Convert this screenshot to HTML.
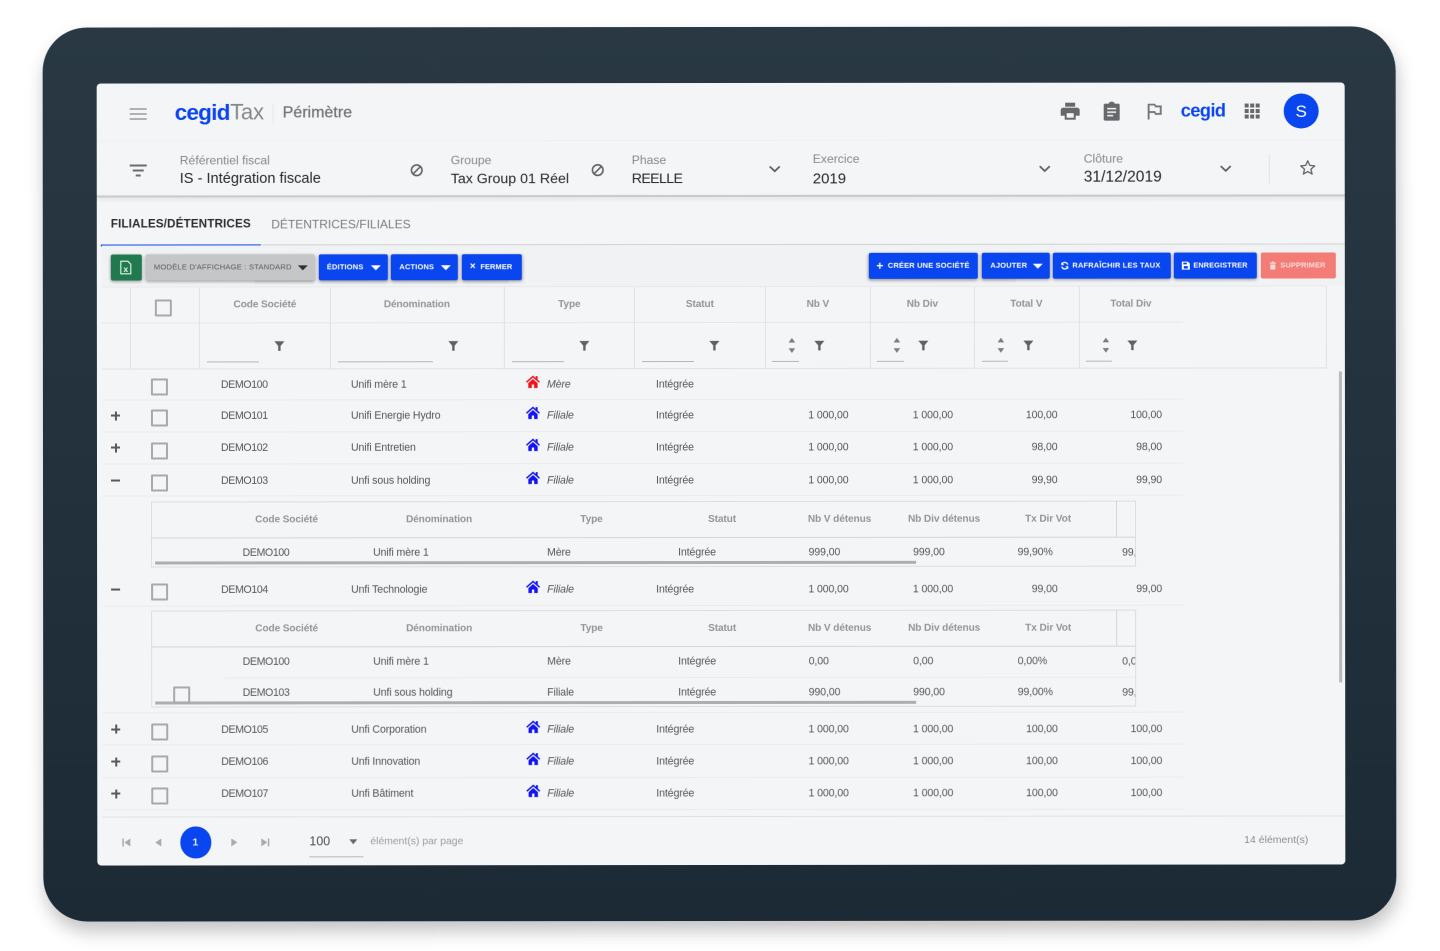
<!DOCTYPE html>
<html lang="fr"><head><meta charset="utf-8"><title>cegid Tax - Périmètre</title>
<style>
html,body{margin:0;padding:0;width:1440px;height:951px;overflow:hidden;background:#fff}
body{font-family:"Liberation Sans",sans-serif;position:relative}
#stage{position:absolute;left:0;top:0;width:1440px;height:951px;transform:rotate(-.05deg);filter:blur(.3px)}
#device{position:absolute;left:43px;top:27px;width:1353px;height:894px;border-radius:44px;background:linear-gradient(#293843,#1c2a36);box-shadow:2px 10px 18px rgba(0,0,0,.24)}
#screen{position:absolute;left:97px;top:83px;width:1248px;height:782px;background:#f4f5f7;border-radius:4px}
.a{position:absolute}
.t{position:absolute;white-space:nowrap;line-height:1;transform:translateY(-50%)}
.c{position:absolute;white-space:nowrap;line-height:1;transform:translate(-50%,-50%)}
.e{position:absolute;white-space:nowrap;line-height:1;transform:translate(-100%,-50%)}
.row{position:absolute;left:0;width:1440px;height:0;margin-top:.7px;font-size:10.6px;color:#53565a;letter-spacing:-.12px}
.hd{font-size:10.1px;font-weight:bold;color:#929598;letter-spacing:-.1px}
.d{letter-spacing:-.38px}
.lb{font-size:12.2px;color:#85888b}
.vl{font-size:15px;color:#25282b}
.it{font-style:italic}
.ln{position:absolute;height:1px;background:#eaebed}
.v{position:absolute;width:1px;background:#dfe1e3}
.cb{position:absolute;width:13px;height:13px;margin-top:-1px;border:2px solid #a8a9ab;border-radius:1px;box-sizing:content-box}
.btn{position:absolute;border-radius:2px;background:#0a46f0;box-shadow:0 1px 3px rgba(0,0,0,.4);color:#fff;font-size:7.5px;font-weight:bold;letter-spacing:.15px;line-height:26px;height:26px;white-space:nowrap;box-sizing:border-box}
.btn span{position:absolute;top:0}
.caret{position:absolute;width:0;height:0;border-left:5px solid transparent;border-right:5px solid transparent;border-top:5px solid #fff;top:11px}
.pl{position:absolute;left:111px;width:9px;height:2px;background:#57595c;margin-top:-2px}
.pl.p:after{content:"";position:absolute;left:3.5px;top:-3.5px;width:2px;height:9px;background:#57595c}
svg{position:absolute;overflow:visible}
.h{left:526px;top:-10px}
.sc{position:absolute;height:3px;left:155px;width:761px;background:#adaeb0}
</style></head><body>
<svg width="0" height="0" style="position:absolute"><defs>
<symbol id="home" viewBox="0 0 24 22"><path d="M12 .5 0 11l1.700 2L12 4l10.300 9 1.700-2-4-3.500V1.500h-3.500v3zM4 13.500V22h6v-6h4v6h6v-8.500L12 6.500z" fill="currentColor"/></symbol>
<symbol id="fun" viewBox="0 0 12 12"><path d="M.5 1h11L7.300 6v5.500H4.700V6z" fill="#5f6265"/></symbol>
<symbol id="chev" viewBox="0 0 12 8"><path d="M1 1.500 6 6.300l5-4.800" fill="none" stroke="#5a5d60" stroke-width="1.700"/></symbol>
<symbol id="ban" viewBox="0 0 14 14"><circle cx="7" cy="7" r="5.300" fill="none" stroke="#5f6265" stroke-width="1.600"/><path d="M3.300 10.700l7.400-7.400" stroke="#5f6265" stroke-width="1.600"/></symbol>
<symbol id="spin" viewBox="0 0 8 18"><path d="M4 1l3.500 5h-7zM4 17 .5 12h7z" fill="#7a7d80"/></symbol>
</defs></svg>
<div id="stage">
<div id="device"></div>
<div id="screen"></div>

<!-- top bar -->
<div class="ln" style="left:97px;top:140px;width:1248px;background:#eff0f2"></div>
<div class="a" style="left:130px;top:107.500px;width:16.500px;height:1.600px;background:#6a6d70;box-shadow:0 5px 0 #6a6d70,0 10px 0 #6a6d70"></div>
<div class="t" style="left:175px;top:112.500px;font-size:22.500px;font-weight:bold;color:#0a46f0;letter-spacing:-.75px">cegid</div>
<div class="t" style="left:230.500px;top:111.500px;font-size:22px;color:#85888b;letter-spacing:-.2px">Tax</div>
<div class="v" style="left:273px;top:103px;height:20px;background:#e6e7e9"></div>
<div class="t" style="left:283px;top:113px;font-size:16px;font-weight:normal;color:#717477;-webkit-text-stroke:.25px #717477">Périmètre</div>

<svg style="left:1061px;top:103px" width="19" height="17" viewBox="0 0 19 17"><path d="M4.500 0h10v4h-10zM2.500 5h14A2.500 2.500 0 0 1 19 7.500V13h-4v4H4v-4H0V7.500A2.500 2.500 0 0 1 2.500 5zM6 10.500V15h7v-4.500z" fill="#66696c" fill-rule="evenodd"/></svg>
<svg style="left:1104px;top:102px" width="16" height="19" viewBox="0 0 16 19"><path d="M1.500 2H5a3 2 0 0 1 6 0h3.500A1.500 1.500 0 0 1 16 3.500v14a1.500 1.500 0 0 1-1.500 1.500h-13A1.500 1.500 0 0 1 0 17.500v-14A1.500 1.500 0 0 1 1.500 2z" fill="#66696c"/><path d="M3.500 7h9M3.500 10.500h9M3.500 14h6" stroke="#f4f5f7" stroke-width="1.500"/></svg>
<svg style="left:1147.500px;top:104px" width="14" height="16" viewBox="5 4 15 17"><path d="M14 6l-1-2H5v17h2v-7h5l1 2h7V6h-6zm4 8h-4l-1-2H7V6h5l1 2h5v6z" fill="#727578"/></svg>
<div class="t" style="left:1181px;top:110.500px;font-size:18.300px;font-weight:bold;color:#0a46f0;letter-spacing:-.6px">cegid</div>
<svg style="left:1245px;top:104px" width="15" height="15" viewBox="0 0 15 15" fill="#66696c"><rect width="4" height="4"/><rect x="5.500" width="4" height="4"/><rect x="11" width="4" height="4"/><rect y="5.500" width="4" height="4"/><rect x="5.500" y="5.500" width="4" height="4"/><rect x="11" y="5.500" width="4" height="4"/><rect y="11" width="4" height="4"/><rect x="5.500" y="11" width="4" height="4"/><rect x="11" y="11" width="4" height="4"/></svg>
<div class="a" style="left:1284px;top:94px;width:35px;height:35px;border-radius:50%;background:#0a46f0"></div>
<div class="c" style="left:1301.500px;top:112px;font-size:17px;color:#fff">S</div>

<!-- filter bar -->
<div class="a" style="left:130px;top:164px;width:16.500px;height:1.600px;background:#6a6d70"></div>
<div class="a" style="left:133px;top:169px;width:11px;height:1.600px;background:#6a6d70"></div>
<div class="a" style="left:136px;top:174px;width:5px;height:1.600px;background:#6a6d70"></div>
<div class="t lb" style="left:180px;top:159.500px">Référentiel fiscal</div>
<div class="t vl" style="left:180px;top:178.500px;font-size:14.600px">IS - Intégration fiscale</div>
<svg style="left:410px;top:163px" width="14" height="14"><use href="#ban"/></svg>
<div class="t lb" style="left:451px;top:159.500px">Groupe</div>
<div class="t vl" style="left:451px;top:178.500px;font-size:14.200px">Tax Group 01 Réel</div>
<svg style="left:591px;top:163px" width="14" height="14"><use href="#ban"/></svg>
<div class="t lb" style="left:632px;top:159.500px">Phase</div>
<div class="t vl" style="left:632px;top:178.500px;font-size:14.200px;letter-spacing:-.65px">REELLE</div>
<svg style="left:768.500px;top:165px" width="12" height="8"><use href="#chev"/></svg>
<div class="t lb" style="left:813px;top:159px">Exercice</div>
<div class="t vl" style="left:813px;top:178.500px">2019</div>
<svg style="left:1039px;top:164.500px" width="12" height="8"><use href="#chev"/></svg>
<div class="t lb" style="left:1084px;top:158.500px">Clôture</div>
<div class="t vl" style="left:1084px;top:178px;font-size:15.600px">31/12/2019</div>
<svg style="left:1220px;top:164.500px" width="12" height="8"><use href="#chev"/></svg>
<div class="v" style="left:1269px;top:155px;height:29px;background:#e3e4e6"></div>
<svg style="left:1300px;top:160px" width="16" height="16" viewBox="0 0 16 16"><path d="M8 1.300l2 4.600 5 .5-3.800 3.300 1.150 4.900L8 12.100l-4.350 2.500L4.800 9.700 1 6.400l5-.5z" fill="none" stroke="#616467" stroke-width="1.300" stroke-linejoin="round"/></svg>
<div class="a" style="left:97px;top:195px;width:1248px;height:2px;background:#c8c9cb;box-shadow:0 2px 4px rgba(0,0,0,.12)"></div>

<!-- tabs -->
<div class="t" style="left:111px;top:224px;font-size:11.700px;font-weight:bold;color:#2b2e31;letter-spacing:.12px">FILIALES/DÉTENTRICES</div>
<div class="t" style="left:271.500px;top:224px;font-size:12px;color:#797c7f;letter-spacing:0">DÉTENTRICES/FILIALES</div>
<div class="a" style="left:101px;top:244px;width:1244px;height:1px;background:#cfd1d3"></div>
<div class="a" style="left:101px;top:243.500px;width:160px;height:2px;background:#0a46f0"></div>

<!-- toolbar -->
<div class="a" style="left:102px;top:245px;width:1243px;height:41px;background:#f1f2f4"></div>
<div class="btn" style="left:110.500px;top:253.500px;width:31px;height:26.500px;background:#217a4f"></div>
<svg style="left:120px;top:260px" width="12" height="14" viewBox="0 0 12 14"><path d="M1 .7h7l3 3v9.600H1z" fill="none" stroke="#e9f3ee" stroke-width="1.100"/><text x="6" y="11.500" font-size="8.500" font-weight="bold" fill="#e9f3ee" text-anchor="middle" font-family="Liberation Sans">x</text></svg>
<div class="btn" style="left:145.500px;top:253.500px;width:169.500px;height:26.500px;background:#c5c6c7;color:#65686b;font-weight:normal;-webkit-text-stroke:.1px #65686b"><span style="left:8.500px;font-size:7.600px;letter-spacing:.2px">MODÈLE D'AFFICHAGE : STANDARD</span><i class="caret" style="left:152px;border-top-color:#2d3033"></i></div>
<div class="btn" style="left:318.500px;top:253.500px;width:69px"><span style="left:8.500px">ÉDITIONS</span><i class="caret" style="left:52px"></i></div>
<div class="btn" style="left:391px;top:253.500px;width:66.500px"><span style="left:8.500px">ACTIONS</span><i class="caret" style="left:50px"></i></div>
<div class="btn" style="left:461.500px;top:253.500px;width:60px"><span style="left:8.500px;font-size:10px">×</span><span style="left:19px;letter-spacing:.05px">FERMER</span></div>

<div class="btn" style="left:868.500px;top:252.500px;width:109.500px"><span style="left:8px;font-size:12px">+</span><span style="left:19.500px">CRÉER UNE SOCIÉTÉ</span></div>
<div class="btn" style="left:982px;top:252.500px;width:67.500px"><span style="left:8.500px">AJOUTER</span><i class="caret" style="left:51px"></i></div>
<div class="btn" style="left:1053px;top:252.500px;width:117.500px"><svg style="left:8px;top:9px" width="8" height="8" viewBox="0 0 8 8"><path d="M7 3A3.200 3.200 0 0 0 1.200 2.300M1 5a3.200 3.200 0 0 0 5.800.7" fill="none" stroke="#fff" stroke-width="1.300"/><path d="M.5 .5v3h3zM7.500 7.500v-3h-3z" fill="#fff"/></svg><span style="left:19.500px">RAFRAÎCHIR LES TAUX</span></div>
<div class="btn" style="left:1174px;top:252.500px;width:83px"><svg style="left:8px;top:9px" width="8" height="8" viewBox="0 0 8 8"><path d="M0 0h6l2 2v6H0z" fill="#fff"/><rect x="2" y="4.500" width="4" height="2.500" fill="#0a46f0"/><rect x="1.500" y="1" width="3.500" height="1.800" fill="#0a46f0"/></svg><span style="left:19.500px;font-size:7.300px">ENREGISTRER</span></div>
<div class="btn" style="left:1261px;top:252.500px;width:75px;background:#f37d76;box-shadow:none;color:#fbdcd9"><svg style="left:8.500px;top:9px" width="6" height="8" viewBox="0 0 6 8"><path d="M0 1h2V0h2v1h2v1.300H0zM.5 3h5v5h-5z" fill="#fbdcd9"/></svg><span style="left:19.500px;font-size:7.400px">SUPPRIMER</span></div>

<!-- table header -->
<div class="ln" style="left:102px;top:322px;width:1081px;background:#e6e7e9"></div>
<div class="ln" style="left:102px;top:368px;width:1225px;background:#e0e1e3"></div>
<div class="ln" style="left:102px;top:286px;width:1225px;background:#e8e9eb"></div>
<div class="v" style="left:130px;top:287px;height:81px"></div>
<div class="v" style="left:199px;top:287px;height:81px"></div>
<div class="v" style="left:330px;top:287px;height:81px"></div>
<div class="v" style="left:504px;top:287px;height:81px"></div>
<div class="v" style="left:634px;top:287px;height:81px"></div>
<div class="v" style="left:765px;top:287px;height:81px"></div>
<div class="v" style="left:870px;top:287px;height:81px"></div>
<div class="v" style="left:974px;top:287px;height:81px"></div>
<div class="v" style="left:1079px;top:287px;height:81px"></div>
<div class="v" style="left:1326px;top:287px;height:81px"></div>
<div class="cb" style="left:155px;top:300px"></div>
<div class="row hd" style="top:304.500px">
<span class="c" style="left:265px">Code Société</span><span class="c" style="left:417px">Dénomination</span><span class="c" style="left:569.500px">Type</span><span class="c" style="left:700px">Statut</span><span class="c" style="left:818px">Nb V</span><span class="c" style="left:922.500px">Nb Div</span><span class="c" style="left:1026.500px">Total V</span><span class="c" style="left:1131px">Total Div</span>
</div>
<div class="a" style="left:207px;top:361px;width:52px;height:1px;background:#b4b6b8"></div>
<div class="a" style="left:338px;top:361px;width:95px;height:1px;background:#b4b6b8"></div>
<div class="a" style="left:512px;top:361px;width:52px;height:1px;background:#b4b6b8"></div>
<div class="a" style="left:642px;top:361px;width:52px;height:1px;background:#b4b6b8"></div>
<div class="a" style="left:772px;top:361px;width:27px;height:1px;background:#b4b6b8"></div>
<div class="a" style="left:877px;top:361px;width:27px;height:1px;background:#b4b6b8"></div>
<div class="a" style="left:982px;top:361px;width:26px;height:1px;background:#b4b6b8"></div>
<div class="a" style="left:1086px;top:361px;width:26px;height:1px;background:#b4b6b8"></div>
<svg style="left:273.500px;top:340px" width="11" height="11"><use href="#fun"/></svg>
<svg style="left:447.500px;top:340px" width="11" height="11"><use href="#fun"/></svg>
<svg style="left:578.500px;top:340px" width="11" height="11"><use href="#fun"/></svg>
<svg style="left:709px;top:340px" width="11" height="11"><use href="#fun"/></svg>
<svg style="left:813.500px;top:340px" width="11" height="11"><use href="#fun"/></svg>
<svg style="left:918px;top:340px" width="11" height="11"><use href="#fun"/></svg>
<svg style="left:1022.500px;top:340px" width="11" height="11"><use href="#fun"/></svg>
<svg style="left:1127px;top:340px" width="11" height="11"><use href="#fun"/></svg>
<svg style="left:788px;top:337px" width="8" height="17"><use href="#spin"/></svg>
<svg style="left:892.500px;top:337px" width="8" height="17"><use href="#spin"/></svg>
<svg style="left:997px;top:337px" width="8" height="17"><use href="#spin"/></svg>
<svg style="left:1101.500px;top:337px" width="8" height="17"><use href="#spin"/></svg>

<!-- row separators -->
<div class="ln" style="left:102px;top:399px;width:1081px"></div>
<div class="ln" style="left:102px;top:431px;width:1081px"></div>
<div class="ln" style="left:102px;top:463px;width:1081px"></div>
<div class="ln" style="left:102px;top:495px;width:1081px"></div>
<div class="ln" style="left:102px;top:605px;width:1081px"></div>
<div class="ln" style="left:102px;top:712px;width:1081px"></div>
<div class="ln" style="left:102px;top:744px;width:1081px"></div>
<div class="ln" style="left:102px;top:777px;width:1081px"></div>
<div class="ln" style="left:102px;top:809px;width:1081px"></div>

<!-- rows -->
<div class="cb" style="left:150.500px;top:378.500px"></div>
<div class="row" style="top:384px"><span class="t d" style="left:221px">DEMO100</span><span class="t" style="left:351px">Unifi mère 1</span><svg class="h" style="color:#f0141e" width="14" height="13"><use href="#home"/></svg><span class="t it" style="left:547px">Mère</span><span class="t" style="left:656px">Intégrée</span></div>

<div class="pl p" style="top:416px"></div><div class="cb" style="left:150.500px;top:410px"></div>
<div class="row" style="top:415.500px"><span class="t d" style="left:221px">DEMO101</span><span class="t" style="left:351px">Unifi Energie Hydro</span><svg class="h" style="color:#1414f0" width="14" height="13"><use href="#home"/></svg><span class="t it" style="left:547px">Filiale</span><span class="t" style="left:656px">Intégrée</span><span class="e" style="left:848.500px">1 000,00</span><span class="e" style="left:953px">1 000,00</span><span class="e" style="left:1057.500px">100,00</span><span class="e" style="left:1162px">100,00</span></div>

<div class="pl p" style="top:448px"></div><div class="cb" style="left:150.500px;top:442.500px"></div>
<div class="row" style="top:447.500px"><span class="t d" style="left:221px">DEMO102</span><span class="t" style="left:351px">Unifi Entretien</span><svg class="h" style="color:#1414f0" width="14" height="13"><use href="#home"/></svg><span class="t it" style="left:547px">Filiale</span><span class="t" style="left:656px">Intégrée</span><span class="e" style="left:848.500px">1 000,00</span><span class="e" style="left:953px">1 000,00</span><span class="e" style="left:1057.500px">98,00</span><span class="e" style="left:1162px">98,00</span></div>

<div class="pl" style="top:480.500px"></div><div class="cb" style="left:150.500px;top:474.500px"></div>
<div class="row" style="top:480px"><span class="t d" style="left:221px">DEMO103</span><span class="t" style="left:351px">Unfi sous holding</span><svg class="h" style="color:#1414f0" width="14" height="13"><use href="#home"/></svg><span class="t it" style="left:547px">Filiale</span><span class="t" style="left:656px">Intégrée</span><span class="e" style="left:848.500px">1 000,00</span><span class="e" style="left:953px">1 000,00</span><span class="e" style="left:1057.500px">99,90</span><span class="e" style="left:1162px">99,90</span></div>

<!-- sub table 1 -->
<div class="a" style="left:150.500px;top:501px;width:985px;height:66px;border:1px solid #dcdde0;box-sizing:border-box"></div>
<div class="ln" style="left:151px;top:537px;width:984px;background:#d3d5d7"></div>
<div class="v" style="left:1116px;top:501px;height:36px;background:#d3d5d7"></div>
<div class="row hd" style="top:519.500px"><span class="c" style="left:286.500px">Code Société</span><span class="c" style="left:439px">Dénomination</span><span class="c" style="left:591.500px">Type</span><span class="c" style="left:722px">Statut</span><span class="c" style="left:839.500px">Nb V détenus</span><span class="c" style="left:944px">Nb Div détenus</span><span class="c" style="left:1048px">Tx Dir Vot</span></div>
<div class="row" style="top:552px"><span class="t d" style="left:242.500px">DEMO100</span><span class="t" style="left:373px">Unifi mère 1</span><span class="t" style="left:547px">Mère</span><span class="t" style="left:678px">Intégrée</span><span class="t" style="left:808.500px">999,00</span><span class="t" style="left:913px">999,00</span><span class="t" style="left:1017.500px">99,90%</span><span class="a" style="left:1122px;top:-7px;width:13px;height:14px;overflow:hidden;line-height:14px">99,90%</span></div>
<div class="sc" style="top:561px"></div>

<div class="pl" style="top:589.500px"></div><div class="cb" style="left:150.500px;top:584px"></div>
<div class="row" style="top:589px"><span class="t d" style="left:221px">DEMO104</span><span class="t" style="left:351px">Unfi Technologie</span><svg class="h" style="color:#1414f0" width="14" height="13"><use href="#home"/></svg><span class="t it" style="left:547px">Filiale</span><span class="t" style="left:656px">Intégrée</span><span class="e" style="left:848.500px">1 000,00</span><span class="e" style="left:953px">1 000,00</span><span class="e" style="left:1057.500px">99,00</span><span class="e" style="left:1162px">99,00</span></div>

<!-- sub table 2 -->
<div class="a" style="left:150.500px;top:610px;width:985px;height:97px;border:1px solid #dcdde0;box-sizing:border-box"></div>
<div class="ln" style="left:151px;top:646px;width:984px;background:#d3d5d7"></div>
<div class="ln" style="left:224px;top:677px;width:911px"></div>
<div class="v" style="left:1116px;top:610px;height:36px;background:#d3d5d7"></div>
<div class="row hd" style="top:628.500px"><span class="c" style="left:286.500px">Code Société</span><span class="c" style="left:439px">Dénomination</span><span class="c" style="left:591.500px">Type</span><span class="c" style="left:722px">Statut</span><span class="c" style="left:839.500px">Nb V détenus</span><span class="c" style="left:944px">Nb Div détenus</span><span class="c" style="left:1048px">Tx Dir Vot</span></div>
<div class="row" style="top:661px"><span class="t d" style="left:242.500px">DEMO100</span><span class="t" style="left:373px">Unifi mère 1</span><span class="t" style="left:547px">Mère</span><span class="t" style="left:678px">Intégrée</span><span class="t" style="left:808.500px">0,00</span><span class="t" style="left:913px">0,00</span><span class="t" style="left:1017.500px">0,00%</span><span class="a" style="left:1122px;top:-7px;width:13px;height:14px;overflow:hidden;line-height:14px">0,00%</span></div>
<div class="row" style="top:692px"><span class="t d" style="left:242.500px">DEMO103</span><span class="t" style="left:373px">Unfi sous holding</span><span class="t" style="left:547px">Filiale</span><span class="t" style="left:678px">Intégrée</span><span class="t" style="left:808.500px">990,00</span><span class="t" style="left:913px">990,00</span><span class="t" style="left:1017.500px">99,00%</span><span class="a" style="left:1122px;top:-7px;width:13px;height:14px;overflow:hidden;line-height:14px">99,00%</span></div>
<div class="sc" style="top:700.500px"></div>
<div class="cb" style="left:172.500px;top:687px"></div>

<div class="pl p" style="top:729.500px"></div><div class="cb" style="left:150.500px;top:723.500px"></div>
<div class="row" style="top:729px"><span class="t d" style="left:221px">DEMO105</span><span class="t" style="left:351px">Unfi Corporation</span><svg class="h" style="color:#1414f0" width="14" height="13"><use href="#home"/></svg><span class="t it" style="left:547px">Filiale</span><span class="t" style="left:656px">Intégrée</span><span class="e" style="left:848.500px">1 000,00</span><span class="e" style="left:953px">1 000,00</span><span class="e" style="left:1057.500px">100,00</span><span class="e" style="left:1162px">100,00</span></div>

<div class="pl p" style="top:762px"></div><div class="cb" style="left:150.500px;top:756px"></div>
<div class="row" style="top:761.500px"><span class="t d" style="left:221px">DEMO106</span><span class="t" style="left:351px">Unfi Innovation</span><svg class="h" style="color:#1414f0" width="14" height="13"><use href="#home"/></svg><span class="t it" style="left:547px">Filiale</span><span class="t" style="left:656px">Intégrée</span><span class="e" style="left:848.500px">1 000,00</span><span class="e" style="left:953px">1 000,00</span><span class="e" style="left:1057.500px">100,00</span><span class="e" style="left:1162px">100,00</span></div>

<div class="pl p" style="top:794px"></div><div class="cb" style="left:150.500px;top:788px"></div>
<div class="row" style="top:793.500px"><span class="t d" style="left:221px">DEMO107</span><span class="t" style="left:351px">Unfi Bâtiment</span><svg class="h" style="color:#1414f0" width="14" height="13"><use href="#home"/></svg><span class="t it" style="left:547px">Filiale</span><span class="t" style="left:656px">Intégrée</span><span class="e" style="left:848.500px">1 000,00</span><span class="e" style="left:953px">1 000,00</span><span class="e" style="left:1057.500px">100,00</span><span class="e" style="left:1162px">100,00</span></div>

<!-- scrollbar -->
<div class="a" style="left:1339px;top:372px;width:3px;height:311px;background:#b9babc"></div>

<!-- pagination -->
<div class="ln" style="left:102px;top:816px;width:1243px;background:#dfe0e2"></div>
<svg style="left:121.500px;top:837.500px" width="8" height="8" viewBox="0 0 8 8" fill="#a9abad"><rect width="1.500" height="8"/><path d="M8 0v8L2 4z"/></svg>
<svg style="left:154.500px;top:837.500px" width="6" height="8" viewBox="0 0 6 8" fill="#a9abad"><path d="M6 0v8L0 4z"/></svg>
<div class="a" style="left:179.500px;top:826px;width:31.500px;height:31.500px;border-radius:50%;background:#0a46f0"></div>
<div class="c" style="left:195px;top:842px;font-size:10.500px;font-weight:bold;color:#e6ebfb">1</div>
<svg style="left:230.500px;top:837.500px" width="6" height="8" viewBox="0 0 6 8" fill="#a9abad"><path d="M0 0v8l6-4z"/></svg>
<svg style="left:261px;top:837.500px" width="8" height="8" viewBox="0 0 8 8" fill="#a9abad"><rect x="6.500" width="1.500" height="8"/><path d="M0 0v8l6-4z"/></svg>
<div class="t" style="left:309px;top:841px;font-size:12.500px;color:#4a4d50">100</div>
<svg style="left:349px;top:838.500px" width="8" height="5" viewBox="0 0 8 5" fill="#66696c"><path d="M0 0h8L4 5z"/></svg>
<div class="a" style="left:309px;top:855.500px;width:54px;height:1px;background:#b4b6b8"></div>
<div class="t" style="left:370px;top:841.500px;font-size:10.400px;color:#9a9c9f">élément(s) par page</div>
<div class="e" style="left:1308px;top:841px;font-size:10.500px;color:#8b8e91">14 élément(s)</div>
</div>
</body></html>
